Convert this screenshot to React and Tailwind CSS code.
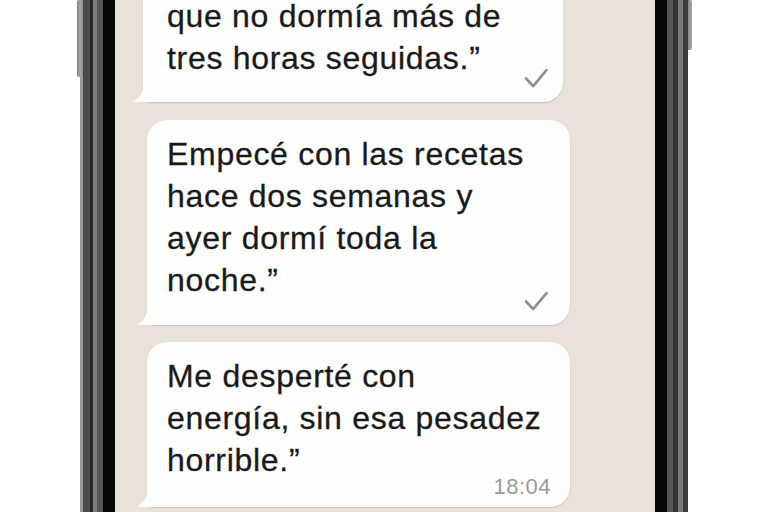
import React from "react";

const Check = ({ className }) => (
  <svg className={className} width="24" height="21" viewBox="0 0 24 21" fill="none">
    <path d="M2 10.5 L9.2 18.2 L22.5 2.2" stroke="#8e8e8e" strokeWidth="2.6" strokeLinecap="round" strokeLinejoin="round" />
  </svg>
);

const Tail = () => (
  <svg className="absolute left-[-10px] bottom-0" width="32" height="22" viewBox="0 0 32 22">
    <path d="M10 0 L10 8 C10 13 6 18 0 22 L32 22 L32 0 Z" fill="#fdfdfc" />
  </svg>
);

const Bubble = ({ className, lines, children }) => (
  <div
    className={
      "relative shrink-0 bg-[#fdfdfc] rounded-[20px] rounded-bl-[6px] shadow-[0_1px_1.5px_rgba(0,0,0,0.13)] " +
      className
    }
  >
    <Tail />
    <div className="relative font-['Liberation_Sans',Arial,sans-serif] text-[32px] leading-[42px] tracking-[0.7px] text-[#1a1a1a] [-webkit-text-stroke:0.3px_#1a1a1a] whitespace-nowrap">
      {lines.map((l, i) => (
        <div key={i}>{l}</div>
      ))}
    </div>
    {children}
  </div>
);

export default function App() {
  return (
    <div className="w-[768px] h-[512px] bg-white flex overflow-hidden">
      <div className="w-[77px] shrink-0 bg-white" />
      <div className="w-[6px] shrink-0 flex flex-col">
        <div className="h-[77px] bg-gradient-to-r from-[#7d7d7d] via-[#a9a9a9] to-[#8a8a8a] rounded-l-[2px]" />
        <div className="flex-1 flex">
          <div className="w-[3px] bg-white" />
          <div className="w-[3px] bg-[#9a9a9a]" />
        </div>
      </div>
      <div className="w-[7px] shrink-0 bg-[#4a4a4a]" />
      <div className="w-[3px] shrink-0 bg-[#262626]" />
      <div className="w-[4px] shrink-0 bg-[#7e7e7e]" />
      <div className="w-[6px] shrink-0 bg-[#555555]" />
      <div className="w-[12px] shrink-0 bg-[#070707]" />

      <div className="w-[540px] shrink-0 h-[512px] bg-[#e8e2da] flex flex-col overflow-hidden">
        <Bubble
          className="ml-[28px] w-[420px] mt-[-30px] pt-[25px] pb-[23px] pl-[24px]"
          lines={["que no dormía más de", "tres horas seguidas.”"]}
        >
          <Check className="absolute right-[15px] bottom-[13px]" />
        </Bubble>
        <Bubble
          className="ml-[32px] w-[423px] mt-[18px] pt-[13px] pb-[24px] pl-[20px]"
          lines={["Empecé con las recetas", "hace dos semanas y", "ayer dormí toda la", "noche.”"]}
        >
          <Check className="absolute right-[22px] bottom-[13px]" />
        </Bubble>
        <Bubble
          className="ml-[32px] w-[423px] mt-[17px] pt-[13px] pb-[26px] pl-[20px]"
          lines={["Me desperté con", "energía, sin esa pesadez", "horrible.”"]}
        >
          <div className="absolute right-[19px] bottom-[7px] font-['Liberation_Sans',Arial,sans-serif] text-[22px] leading-[26px] tracking-[0.5px] text-[#9b9b9b]">
            18:04
          </div>
        </Bubble>
      </div>

      <div className="w-[12px] shrink-0 bg-[#070707]" />
      <div className="w-[6px] shrink-0 bg-[#575757]" />
      <div className="w-[5px] shrink-0 bg-[#333333]" />
      <div className="w-[5px] shrink-0 bg-[#7a7a7a]" />
      <div className="w-[5px] shrink-0 bg-[#3c3c3c]" />
      <div className="w-[4px] shrink-0 flex flex-col">
        <div className="h-[50px] bg-gradient-to-r from-[#8a8a8a] to-[#a5a5a5] rounded-r-[2px]" />
        <div className="flex-1 bg-white" />
      </div>
      <div className="flex-1 bg-white" />
    </div>
  );
}
